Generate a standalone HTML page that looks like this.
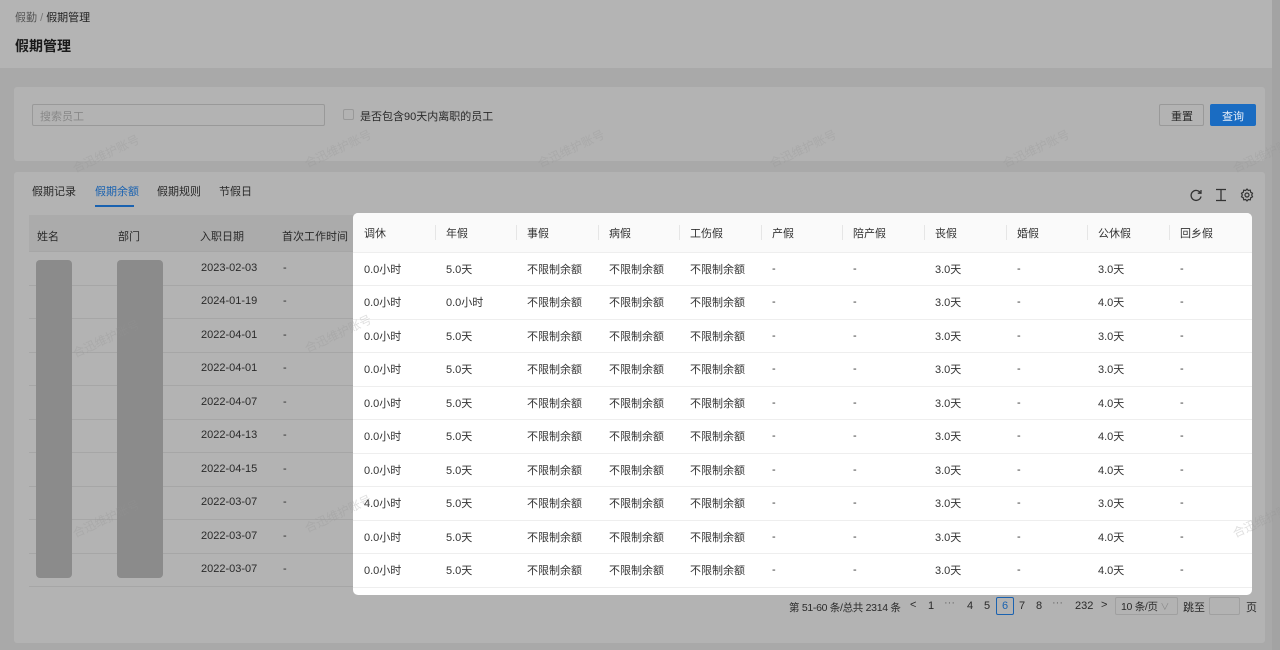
<!DOCTYPE html>
<html><head><meta charset="utf-8"><style>
*{margin:0;padding:0;box-sizing:border-box}
body{width:1280px;height:650px;background:#a9a9a9;font-family:"Liberation Sans","Noto Sans CJK SC",sans-serif;font-size:11px;color:#222;position:relative;overflow:hidden}
.a{position:absolute}
.hdr{left:0;top:0;width:1272px;height:68px;background:#b4b4b4}
.card{background:#b3b3b3;border-radius:3px}
.sb{left:1272px;top:0;width:8px;height:650px;background:#a3a3a3}
.lt{color:#2a2a2a;white-space:nowrap}
.panel{left:353px;top:213px;width:899px;height:382px;background:#fff;border-radius:5px;overflow:hidden}
.panel table{border-collapse:collapse;table-layout:fixed;width:899px}
.panel td,.panel th{height:33.5px;padding-left:11px;text-align:left;font-weight:normal;white-space:nowrap;border-bottom:1px solid #eee;color:#333}
.panel th{height:39px;background:#fafafa;position:relative;padding-top:2px}
.panel th+th:before{content:"";position:absolute;left:0;top:12px;height:15px;border-left:1px solid #e6e6e6}
.lrow{left:29px;width:324px;height:33.5px;border-bottom:1px solid #a6a6a6}
.wm{color:rgba(150,150,150,.3);font-size:12px;transform:rotate(-25deg);white-space:nowrap}
.pg{font-size:10.5px;letter-spacing:-0.3px}
</style></head><body>
<div class="a hdr"></div>
<div class="a sb"></div>
<div class="a lt" style="left:15px;top:9px;font-size:11px;color:#555">假勤 <span style="color:#777">/</span> <span style="color:#222">假期管理</span></div>
<div class="a lt" style="left:15px;top:36px;font-size:14px;font-weight:bold;color:#1a1a1a">假期管理</div>

<div class="a card" style="left:14px;top:87px;width:1251px;height:74px"></div>
<div class="a" style="left:32px;top:104px;width:293px;height:22px;border:1px solid #999;border-radius:2px;background:#b3b3b3"></div>
<div class="a lt" style="left:40px;top:108px;color:#888">搜索员工</div>
<div class="a" style="left:343px;top:109px;width:11px;height:11px;border:1px solid #999;border-radius:2px"></div>
<div class="a lt" style="left:360px;top:108px">是否包含90天内离职的员工</div>
<div class="a" style="left:1159px;top:104px;width:45px;height:22px;border:1px solid #999;border-radius:2px"></div>
<div class="a lt" style="left:1171px;top:108px">重置</div>
<div class="a" style="left:1210px;top:104px;width:46px;height:22px;background:#1a6cc2;border-radius:2px"></div>
<div class="a lt" style="left:1222px;top:108px;color:#e8eef8">查询</div>

<div class="a card" style="left:14px;top:172px;width:1251px;height:471px"></div>
<div class="a lt" style="left:32px;top:183px">假期记录</div>
<div class="a lt" style="left:95px;top:183px;color:#1a62b0">假期余额</div>
<div class="a" style="left:95px;top:205px;width:39px;height:2px;background:#1a62b0"></div>
<div class="a lt" style="left:157px;top:183px">假期规则</div>
<div class="a lt" style="left:219px;top:183px">节假日</div>
<svg class="a" style="left:1189px;top:188px" width="14" height="14" viewBox="0 0 14 14" fill="none" stroke="#333" stroke-width="1.3"><path d="M11.5 5A5 5 0 1 0 12 8.5"/><path d="M12 2v3.2H8.8"/></svg>
<svg class="a" style="left:1215px;top:188px" width="12" height="14" viewBox="0 0 12 14" fill="none" stroke="#333" stroke-width="1.3"><path d="M1 1.5h10M1 12.5h10M6 2v10"/></svg>
<svg class="a" style="left:1240px;top:188px" width="14" height="14" viewBox="0 0 14 14" fill="none" stroke="#333" stroke-width="1.2"><path d="M7 1l1.3 1.5 2-.3.4 2 1.8 1-.8 1.8.8 1.8-1.8 1-.4 2-2-.3L7 13l-1.3-1.5-2 .3-.4-2-1.8-1L2.3 7 1.5 5.2l1.8-1 .4-2 2 .3z"/><circle cx="7" cy="7" r="2"/></svg>

<div class="a" style="left:29px;top:215px;width:324px;height:37px;background:#ababab;border-bottom:1px solid #a6a6a6"></div>
<div class="a lt" style="left:37px;top:228px">姓名</div>
<div class="a lt" style="left:118px;top:228px">部门</div>
<div class="a lt" style="left:200px;top:228px">入职日期</div>
<div class="a lt" style="left:282px;top:228px">首次工作时间</div>

<div class="a lrow" style="top:252px"></div><div class="a lrow" style="top:285.5px"></div><div class="a lrow" style="top:319px"></div><div class="a lrow" style="top:352.5px"></div><div class="a lrow" style="top:386px"></div><div class="a lrow" style="top:419.5px"></div><div class="a lrow" style="top:453px"></div><div class="a lrow" style="top:486.5px"></div><div class="a lrow" style="top:520px"></div><div class="a lrow" style="top:553.5px"></div>
<div class="a" style="left:36px;top:260px;width:36px;height:318px;background:#8b8b8b;border-radius:4px"></div>
<div class="a" style="left:117px;top:260px;width:46px;height:318px;background:#8b8b8b;border-radius:4px"></div>
<div class="a lt" style="left:201px;top:262px">2023-02-03</div><div class="a lt" style="left:283px;top:262px">-</div>
<div class="a lt" style="left:201px;top:295px">2024-01-19</div><div class="a lt" style="left:283px;top:295px">-</div>
<div class="a lt" style="left:201px;top:329px">2022-04-01</div><div class="a lt" style="left:283px;top:329px">-</div>
<div class="a lt" style="left:201px;top:362px">2022-04-01</div><div class="a lt" style="left:283px;top:362px">-</div>
<div class="a lt" style="left:201px;top:396px">2022-04-07</div><div class="a lt" style="left:283px;top:396px">-</div>
<div class="a lt" style="left:201px;top:429px">2022-04-13</div><div class="a lt" style="left:283px;top:429px">-</div>
<div class="a lt" style="left:201px;top:463px">2022-04-15</div><div class="a lt" style="left:283px;top:463px">-</div>
<div class="a lt" style="left:201px;top:496px">2022-03-07</div><div class="a lt" style="left:283px;top:496px">-</div>
<div class="a lt" style="left:201px;top:530px">2022-03-07</div><div class="a lt" style="left:283px;top:530px">-</div>
<div class="a lt" style="left:201px;top:563px">2022-03-07</div><div class="a lt" style="left:283px;top:563px">-</div>

<div class="a panel"><table>
<colgroup><col style="width:82px"><col style="width:81px"><col style="width:82px"><col style="width:81px"><col style="width:82px"><col style="width:81px"><col style="width:82px"><col style="width:82px"><col style="width:81px"><col style="width:82px"><col style="width:83px"></colgroup>
<tr><th>调休</th><th>年假</th><th>事假</th><th>病假</th><th>工伤假</th><th>产假</th><th>陪产假</th><th>丧假</th><th>婚假</th><th>公休假</th><th>回乡假</th></tr>
<tr><td>0.0小时</td><td>5.0天</td><td>不限制余额</td><td>不限制余额</td><td>不限制余额</td><td>-</td><td>-</td><td>3.0天</td><td>-</td><td>3.0天</td><td>-</td></tr>
<tr><td>0.0小时</td><td>0.0小时</td><td>不限制余额</td><td>不限制余额</td><td>不限制余额</td><td>-</td><td>-</td><td>3.0天</td><td>-</td><td>4.0天</td><td>-</td></tr>
<tr><td>0.0小时</td><td>5.0天</td><td>不限制余额</td><td>不限制余额</td><td>不限制余额</td><td>-</td><td>-</td><td>3.0天</td><td>-</td><td>3.0天</td><td>-</td></tr>
<tr><td>0.0小时</td><td>5.0天</td><td>不限制余额</td><td>不限制余额</td><td>不限制余额</td><td>-</td><td>-</td><td>3.0天</td><td>-</td><td>3.0天</td><td>-</td></tr>
<tr><td>0.0小时</td><td>5.0天</td><td>不限制余额</td><td>不限制余额</td><td>不限制余额</td><td>-</td><td>-</td><td>3.0天</td><td>-</td><td>4.0天</td><td>-</td></tr>
<tr><td>0.0小时</td><td>5.0天</td><td>不限制余额</td><td>不限制余额</td><td>不限制余额</td><td>-</td><td>-</td><td>3.0天</td><td>-</td><td>4.0天</td><td>-</td></tr>
<tr><td>0.0小时</td><td>5.0天</td><td>不限制余额</td><td>不限制余额</td><td>不限制余额</td><td>-</td><td>-</td><td>3.0天</td><td>-</td><td>4.0天</td><td>-</td></tr>
<tr><td>4.0小时</td><td>5.0天</td><td>不限制余额</td><td>不限制余额</td><td>不限制余额</td><td>-</td><td>-</td><td>3.0天</td><td>-</td><td>3.0天</td><td>-</td></tr>
<tr><td>0.0小时</td><td>5.0天</td><td>不限制余额</td><td>不限制余额</td><td>不限制余额</td><td>-</td><td>-</td><td>3.0天</td><td>-</td><td>4.0天</td><td>-</td></tr>
<tr><td>0.0小时</td><td>5.0天</td><td>不限制余额</td><td>不限制余额</td><td>不限制余额</td><td>-</td><td>-</td><td>3.0天</td><td>-</td><td>4.0天</td><td>-</td></tr>
</table></div>

<div class="a lt pg" style="left:789px;top:600px">第 51-60 条/总共 2314 条</div>
<div class="a lt" style="left:910px;top:599px">&lt;</div>
<div class="a lt" style="left:928px;top:600px">1</div>
<div class="a lt" style="left:944px;top:597px;color:#666">···</div>
<div class="a lt" style="left:967px;top:600px">4</div>
<div class="a lt" style="left:984px;top:600px">5</div>
<div class="a" style="left:996px;top:597px;width:18px;height:18px;border:1px solid #1a62b0;border-radius:2px"></div>
<div class="a lt" style="left:1002px;top:600px;color:#1a62b0">6</div>
<div class="a lt" style="left:1019px;top:600px">7</div>
<div class="a lt" style="left:1036px;top:600px">8</div>
<div class="a lt" style="left:1052px;top:597px;color:#666">···</div>
<div class="a lt" style="left:1075px;top:600px">232</div>
<div class="a lt" style="left:1101px;top:599px">&gt;</div>
<div class="a" style="left:1115px;top:597px;width:63px;height:18px;border:1px solid #a0a0a0;border-radius:2px"></div>
<div class="a lt pg" style="left:1121px;top:599px">10 条/页 <span style="color:#888;font-size:9px">∨</span></div>
<div class="a lt" style="left:1183px;top:599px">跳至</div>
<div class="a" style="left:1209px;top:597px;width:31px;height:18px;border:1px solid #a0a0a0;border-radius:2px"></div>
<div class="a lt" style="left:1246px;top:599px">页</div>

<div class="a wm" style="left:70px;top:145px">合迅维护账号</div>
<div class="a wm" style="left:302px;top:140px">合迅维护账号</div>
<div class="a wm" style="left:535px;top:140px">合迅维护账号</div>
<div class="a wm" style="left:767px;top:140px">合迅维护账号</div>
<div class="a wm" style="left:1000px;top:140px">合迅维护账号</div>
<div class="a wm" style="left:1230px;top:145px">合迅维护账号</div>
<div class="a wm" style="left:70px;top:330px">合迅维护账号</div>
<div class="a wm" style="left:302px;top:325px">合迅维护账号</div>
<div class="a wm" style="left:70px;top:510px">合迅维护账号</div>
<div class="a wm" style="left:302px;top:505px">合迅维护账号</div>
<div class="a wm" style="left:1230px;top:510px">合迅维护账号</div>
</body></html>
